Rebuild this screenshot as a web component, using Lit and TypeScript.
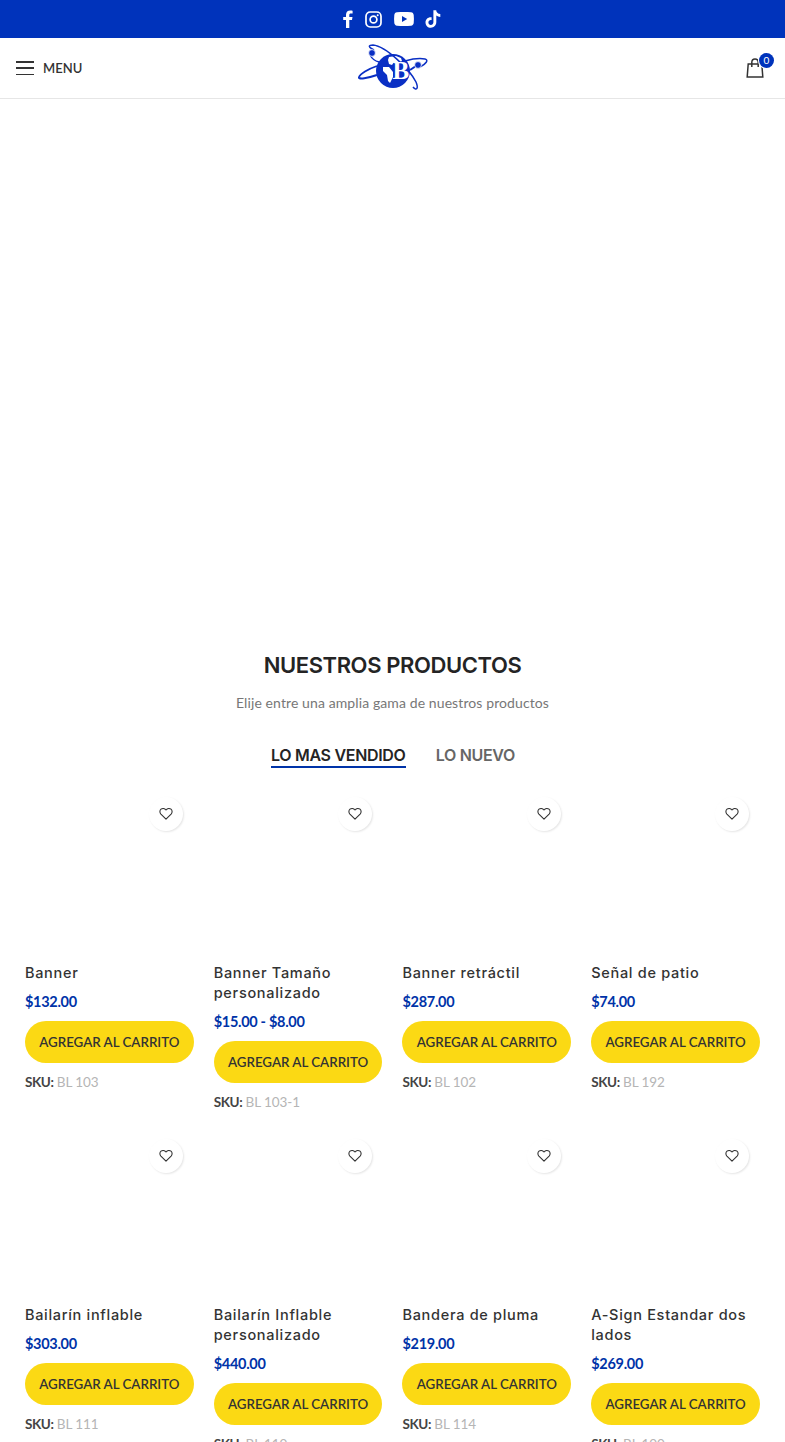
import { LitElement, html, css, svg } from 'lit';
import { customElement } from 'lit/decorators.js';

interface Product {
  name: string;
  price: string;
  sku: string;
}

const PRODUCTS: Product[] = [
  { name: 'Banner', price: '$132.00', sku: 'BL 103' },
  { name: 'Banner Tamaño personalizado', price: '$15.00 - $8.00', sku: 'BL 103-1' },
  { name: 'Banner retráctil', price: '$287.00', sku: 'BL 102' },
  { name: 'Señal de patio', price: '$74.00', sku: 'BL 192' },
  { name: 'Bailarín inflable', price: '$303.00', sku: 'BL 111' },
  { name: 'Bailarín Inflable personalizado', price: '$440.00', sku: 'BL 110' },
  { name: 'Bandera de pluma', price: '$219.00', sku: 'BL 114' },
  { name: 'A-Sign Estandar dos lados', price: '$269.00', sku: 'BL 100' },
];

const heart = svg`<path d="M7 12.2 L1.9 7.1 C0.5 5.6 0.6 3.4 2 2.2 C3.4 1 5.6 1.2 7 3 C8.4 1.2 10.6 1 12 2.2 C13.4 3.4 13.5 5.6 12.1 7.1 Z" fill="none" stroke="#333" stroke-width="1.1" stroke-linejoin="round"/>`;

@customElement('app-root')
export class AppRoot extends LitElement {
  static styles = css`
    :host {
      display: block;
      height: 1442px;
      overflow: hidden;
      background: #fff;
      font-family: Lato, sans-serif;
      color: #333;
    }

    .topbar {
      height: 38px;
      background: #0033bb;
      display: flex;
      align-items: center;
      justify-content: center;
      gap: 9px;
      padding-right: 5px;
    }

    .topbar svg {
      display: block;
      fill: #fff;
    }

    .header {
      height: 60px;
      border-bottom: 1px solid #e6e6e6;
      display: grid;
      grid-template-columns: 1fr auto 1fr;
      align-items: center;
      padding: 0 11px;
    }

    .menu {
      display: flex;
      align-items: center;
      gap: 9px;
      margin-left: 5px;
      font-size: 13px;
      line-height: 14px;
      font-weight: 600;
      color: #333;
    }

    .burger {
      width: 18px;
      height: 14px;
      display: flex;
      flex-direction: column;
      justify-content: space-between;
    }

    .burger span {
      display: block;
      height: 1.5px;
      background: #333;
    }

    .logo {
      position: relative;
      width: 70px;
      height: 48px;
      display: block;
    }

    .logo b {
      position: absolute;
      left: 35px;
      top: 14px;
      font-family: 'Liberation Serif', serif;
      font-size: 25px;
      line-height: 25px;
      font-weight: 700;
      color: #fff;
    }

    .cart {
      justify-self: end;
      position: relative;
      width: 28px;
      height: 30px;
    }

    .cart svg {
      position: absolute;
      left: 0;
      top: 5px;
    }

    .badge {
      position: absolute;
      left: 13px;
      top: 0;
      width: 15px;
      height: 15px;
      border-radius: 50%;
      background: #0033bb;
      box-shadow: 0 0 0 1px #fff;
      color: #fff;
      font-size: 10px;
      line-height: 15px;
      text-align: center;
    }

    .hero {
      height: 551px;
    }

    .section-head {
      text-align: center;
    }

    h2 {
      margin: 0;
      font-family: Inter, sans-serif;
      font-size: 22px;
      line-height: 30px;
      font-weight: 600;
      letter-spacing: -0.4px;
      color: #242424;
    }

    .sub {
      margin: 13px 0 0;
      font-size: 14px;
      line-height: 20px;
      letter-spacing: 0.1px;
      color: #777;
    }

    .tabs {
      display: flex;
      justify-content: center;
      gap: 30px;
      margin-top: 31px;
      padding-left: 1px;
      font-family: Inter, sans-serif;
      font-size: 16px;
      line-height: 22px;
      font-weight: 600;
      letter-spacing: -0.3px;
      color: #666;
    }

    .tabs span {
      border-bottom: 2px solid transparent;
    }

    .tabs .on {
      color: #242424;
      border-bottom-color: #0033a8;
    }

    .grid {
      display: grid;
      grid-template-columns: repeat(4, 1fr);
      column-gap: 20px;
      row-gap: 27.5px;
      padding: 0 25.05px 0 24.95px;
      margin-top: 29px;
    }

    .card {
      position: relative;
    }

    .thumb {
      height: 166px;
    }

    .wish {
      position: absolute;
      top: 0;
      right: 10.5px;
      width: 34px;
      height: 34px;
      border-radius: 50%;
      background: #fff;
      box-shadow: 1px 1px 2px rgba(0, 0, 0, 0.1);
      display: flex;
      align-items: center;
      justify-content: center;
    }

    .name {
      margin: 0;
      font-family: Inter, sans-serif;
      font-size: 14.5px;
      line-height: 20px;
      font-weight: 500;
      letter-spacing: 0.7px;
      color: #333;
    }

    .price {
      margin-top: 8.5px;
      font-size: 14.5px;
      line-height: 20px;
      font-weight: 700;
      letter-spacing: -0.3px;
      color: #0033a8;
    }

    .add {
      display: block;
      width: 100%;
      height: 42px;
      margin-top: 9.5px;
      border: 0;
      border-radius: 21px;
      background: #fbd914;
      font-family: Lato, sans-serif;
      font-size: 13.3px;
      font-weight: 600;
      color: #333;
      padding: 0;
    }

    .sku {
      margin-top: 8.5px;
      font-size: 13.5px;
      line-height: 20px;
      letter-spacing: -0.1px;
      color: #b5b5b5;
    }

    .sku b {
      color: #444;
      font-weight: 700;
      letter-spacing: -0.4px;
    }
  `;

  renderLogo() {
    return html`<div class="logo">
      <svg width="70" height="48" viewBox="0 0 70 48" fill="none">
        <circle cx="35" cy="27" r="17" fill="#0a2fc4" />
        <path d="M31 13 l7 -1 l5 2 l1 3 l-5 2 l-3 -1 l-2 3 l-3 -1 l-1 -4 z M25 23 l6 0 l4 5 l0 5 l-3 6 l-2 -2 l-1 -6 l-4 -4 z" fill="#fff" />
        <path d="M16 6 C10 3 10 1 15 1 C28 2 52 26 58 38 C61 45 58 47 55 43" stroke="#0a2fc4" stroke-width="1.5" />
        <path d="M12 11 C14 15 17 17 21 18" stroke="#0a2fc4" stroke-width="1.3" />
        <path d="M62 23 C68 20 71 16 67 15 C62 14 54 15 47 17" stroke="#0a2fc4" stroke-width="1.5" />
        <path d="M1 33 C2 30 10 25 19 22" stroke="#0a2fc4" stroke-width="1.8" />
        <path d="M1 33 C0 36 10 34 19 31" stroke="#0a2fc4" stroke-width="2.2" />
        <path d="M52 26 L58 22" stroke="#0a2fc4" stroke-width="2" />
        <circle cx="14" cy="9" r="3.4" fill="#0a2fc4" stroke="#fff" stroke-width="0.8" />
        <circle cx="60" cy="21" r="3.4" fill="#0a2fc4" stroke="#fff" stroke-width="0.8" />
      </svg>
      <b>B</b>
    </div>`;
  }

  renderCard(p: Product) {
    return html`<div class="card">
      <div class="thumb"></div>
      <div class="wish">
        <svg width="14" height="14" viewBox="0 0 14 14">${heart}</svg>
      </div>
      <h3 class="name">${p.name}</h3>
      <div class="price">${p.price}</div>
      <button class="add">AGREGAR AL CARRITO</button>
      <div class="sku"><b>SKU:</b> ${p.sku}</div>
    </div>`;
  }

  render() {
    return html`
      <div class="topbar">
        <svg width="16" height="18" viewBox="0 0 16 18"><path d="M6 18 V10 H3.2 V7 H6 V4.8 C6 2 7.7 0.5 10.2 0.5 C11.4 0.5 12.3 0.6 12.6 0.7 V3.4 H10.9 C9.6 3.4 9.3 4 9.3 5 V7 H12.5 L12 10 H9.3 V18 Z" /></svg>
        <svg width="17" height="17" viewBox="0 0 17 17">
          <rect x="1" y="1" width="15" height="15" rx="4.2" fill="none" stroke="#fff" stroke-width="1.7" />
          <circle cx="8.5" cy="8.5" r="3.4" fill="none" stroke="#fff" stroke-width="1.7" />
          <circle cx="12.7" cy="4.3" r="1" />
        </svg>
        <svg width="20" height="14" viewBox="0 0 20 14" style="margin-left:3px"><path fill-rule="evenodd" d="M3 0.3 C7 0 13 0 17 0.3 C18.6 0.5 19.5 1.4 19.7 3 C20 5.5 20 8.5 19.7 11 C19.5 12.6 18.6 13.5 17 13.7 C13 14 7 14 3 13.7 C1.4 13.5 0.5 12.6 0.3 11 C0 8.5 0 5.5 0.3 3 C0.5 1.4 1.4 0.5 3 0.3 Z M8 4 V10 L13.2 7 Z" /></svg>
        <svg width="16" height="18" viewBox="0 0 16 18" style="margin-left:2px"><path d="M8.4 0.3 H11.2 C11.4 2.4 12.8 3.9 15.3 4.1 V6.9 C13.8 6.9 12.4 6.4 11.3 5.6 V12 C11.3 15.3 8.9 17.7 5.8 17.7 C2.8 17.7 0.5 15.3 0.5 12.4 C0.5 9.2 3.3 6.8 6.6 7.3 V10.2 C5 9.7 3.4 10.8 3.4 12.4 C3.4 13.8 4.5 14.9 5.8 14.9 C7.2 14.9 8.4 13.8 8.4 12.2 Z" /></svg>
      </div>
      <header class="header">
        <div class="menu">
          <div class="burger"><span></span><span></span><span></span></div>
          MENU
        </div>
        ${this.renderLogo()}
        <div class="cart">
          <svg width="18" height="20" viewBox="0 0 18 20" fill="none" stroke="#333" stroke-width="1.5">
            <path d="M2.2 6 H15.8 L16.8 19 H1.2 Z" />
            <path d="M5.8 9 V4.5 C5.8 2.5 7.2 1 9 1 C10.8 1 12.2 2.5 12.2 4.5 V9" />
          </svg>
          <span class="badge">0</span>
        </div>
      </header>
      <div class="hero"></div>
      <div class="section-head">
        <h2>NUESTROS PRODUCTOS</h2>
        <p class="sub">Elije entre una amplia gama de nuestros productos</p>
        <div class="tabs">
          <span class="on">LO MAS VENDIDO</span>
          <span>LO NUEVO</span>
        </div>
      </div>
      <div class="grid">${PRODUCTS.map((p) => this.renderCard(p))}</div>
    `;
  }
}
